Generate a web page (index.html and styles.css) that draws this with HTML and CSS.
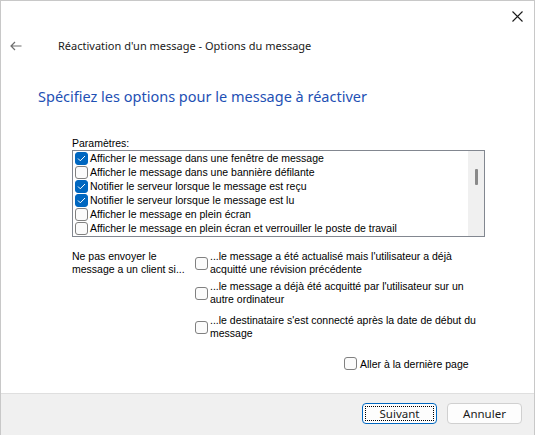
FILE: index.html
```html
<!DOCTYPE html>
<html lang="fr">
<head>
    <meta charset="UTF-8">
    <meta name="viewport" content="width=device-width, initial-scale=1.0">
    <title>Réactivation d'un message</title>
    <link rel="stylesheet" href="styles.css">
</head>
<body>
    <div class="window">
        <div class="titlebar">
            <span class="close">
                <svg width="11" height="11" viewBox="0 0 11 11"><path d="M0.5 0.5 L10.5 10.5 M10.5 0.5 L0.5 10.5" stroke="#1a1a1a" stroke-width="1.1" fill="none"/></svg>
            </span>
        </div>

        <div class="header">
            <span class="back">
                <svg width="12" height="10" viewBox="0 0 12 10"><path d="M11.5 5 H1 M5 1 L1 5 L5 9" stroke="#6e6e6e" stroke-width="1.2" fill="none"/></svg>
            </span>
            <span class="title">Réactivation d'un message - Options du message</span>
        </div>

        <div class="content">
            <h1>Spécifiez les options pour le message à réactiver</h1>

            <div class="params">
                <div class="label">Paramètres:</div>
                <div class="listbox">
                    <div class="rows">
                        <div class="row"><span class="box checked"><svg width="9" height="7" viewBox="0 0 9 7"><path d="M1 3.5 L3.3 5.8 L8 1" stroke="#fff" stroke-width="1" fill="none"/></svg></span>Afficher le message dans une fenêtre de message</div>
                        <div class="row"><span class="box"></span>Afficher le message dans une bannière défilante</div>
                        <div class="row"><span class="box checked"><svg width="9" height="7" viewBox="0 0 9 7"><path d="M1 3.5 L3.3 5.8 L8 1" stroke="#fff" stroke-width="1" fill="none"/></svg></span>Notifier le serveur lorsque le message est reçu</div>
                        <div class="row"><span class="box checked"><svg width="9" height="7" viewBox="0 0 9 7"><path d="M1 3.5 L3.3 5.8 L8 1" stroke="#fff" stroke-width="1" fill="none"/></svg></span>Notifier le serveur lorsque le message est lu</div>
                        <div class="row"><span class="box"></span>Afficher le message en plein écran</div>
                        <div class="row"><span class="box"></span>Afficher le message en plein écran et verrouiller le poste de travail</div>
                    </div>
                    <div class="scrollbar"><span class="thumb"></span></div>
                </div>
            </div>

            <div class="conditions">
                <div class="cond-label">Ne pas envoyer le<br>message a un client si...</div>
                <div class="cond-list">
                    <div class="option"><span class="box"></span><span>...le message a été actualisé mais l'utilisateur a déjà<br>acquitté une révision précédente</span></div>
                    <div class="option"><span class="box"></span><span>...le message a déjà été acquitté par l'utilisateur sur un<br>autre ordinateur</span></div>
                    <div class="option spaced"><span class="box"></span><span>...le destinataire s'est connecté après la date de début du<br>message</span></div>
                </div>
            </div>

            <div class="last-page">
                <span class="box"></span>Aller à la dernière page
            </div>
        </div>

        <div class="footer">
            <button class="btn primary"><span class="focus">Suivant</span></button>
            <button class="btn">Annuler</button>
        </div>
    </div>
</body>
</html>
```

FILE: styles.css
```css
body {
    margin: 0;
    padding: 0;
    background: #fff;
}

.window {
    width: 535px;
    height: 435px;
    box-sizing: border-box;
    border: 1px solid #c8c8c8;
    border-bottom: none;
    display: flex;
    flex-direction: column;
    font-family: "Liberation Sans", Arial, sans-serif;
    font-size: 10.5px;
    color: #000;
}

.titlebar {
    height: 29px;
    flex-shrink: 0;
    display: flex;
    justify-content: flex-end;
    align-items: center;
}

    .titlebar .close {
        display: flex;
        margin-right: 11px;
        margin-top: 1px;
    }

.header {
    height: 31px;
    flex-shrink: 0;
    display: flex;
    align-items: center;
}

    .header .back {
        display: flex;
        margin-left: 9px;
        width: 48px;
    }

    .header .title {
        font-family: "Noto Sans", sans-serif;
        font-size: 11px;
        color: #1a1a1a;
    }

.content {
    flex: 1;
    padding: 0 0 0 37px;
}

h1 {
    margin: 25px 0 0;
    font-family: "Noto Sans", sans-serif;
    font-size: 14.5px;
    font-weight: normal;
    color: #1e50b4;
}

.params {
    margin: 30px 0 0 34px;
    width: 413px;
}

    .params .label {
        height: 14px;
        line-height: 14px;
    }

.listbox {
    display: flex;
    height: 85px;
    border: 1px solid #828790;
    overflow: hidden;
}

.rows {
    flex: 1;
    padding-left: 2px;
}

.row {
    height: 14px;
    display: flex;
    align-items: center;
    white-space: nowrap;
}

.box {
    width: 11px;
    height: 11px;
    border: 1px solid #808080;
    border-radius: 3px;
    background: #fbfbfb;
    margin-right: 2px;
    flex-shrink: 0;
    display: flex;
    align-items: center;
    justify-content: center;
}

    .box.checked {
        background: #0067c0;
        border-color: #0067c0;
    }

.scrollbar {
    width: 16px;
    background: #f0f0f0;
    display: flex;
    justify-content: center;
}

    .scrollbar .thumb {
        width: 3px;
        height: 16px;
        margin-top: 18px;
        background: #8a8a8a;
        border-radius: 1px;
    }

.conditions {
    display: flex;
    margin: 13px 0 0 34px;
}

.cond-label {
    width: 123px;
    line-height: 13px;
}

.cond-list {
    display: flex;
    flex-direction: column;
    gap: 4px;
}

.option {
    display: flex;
    align-items: center;
    line-height: 13px;
}

    .option.spaced {
        margin-top: 4px;
    }

    .option .box {
        margin-right: 2px;
    }

.last-page {
    display: flex;
    align-items: center;
    margin: 17px 0 0 306px;
}

    .last-page .box {
        margin-right: 3px;
    }

.footer {
    height: 42px;
    box-sizing: border-box;
    flex-shrink: 0;
    background: #f0f0f0;
    border-top: 1px solid #dfdfdf;
    display: flex;
    justify-content: flex-end;
    align-items: flex-start;
    gap: 10px;
    padding: 9px 12px 0 0;
}

.btn {
    width: 75px;
    height: 21px;
    padding: 0;
    background: #fdfdfd;
    border: 1px solid #d0d0d0;
    border-radius: 4px;
    font-family: "Noto Sans", sans-serif;
    font-size: 11.5px;
    color: #1a1a1a;
    display: flex;
    align-items: center;
    justify-content: center;
}

    .btn.primary {
        border-color: #0067c0;
        padding: 2px;
    }

    .btn .focus {
        flex: 1;
        align-self: stretch;
        display: flex;
        align-items: center;
        justify-content: center;
        border: 1px dotted #000;
    }
```
